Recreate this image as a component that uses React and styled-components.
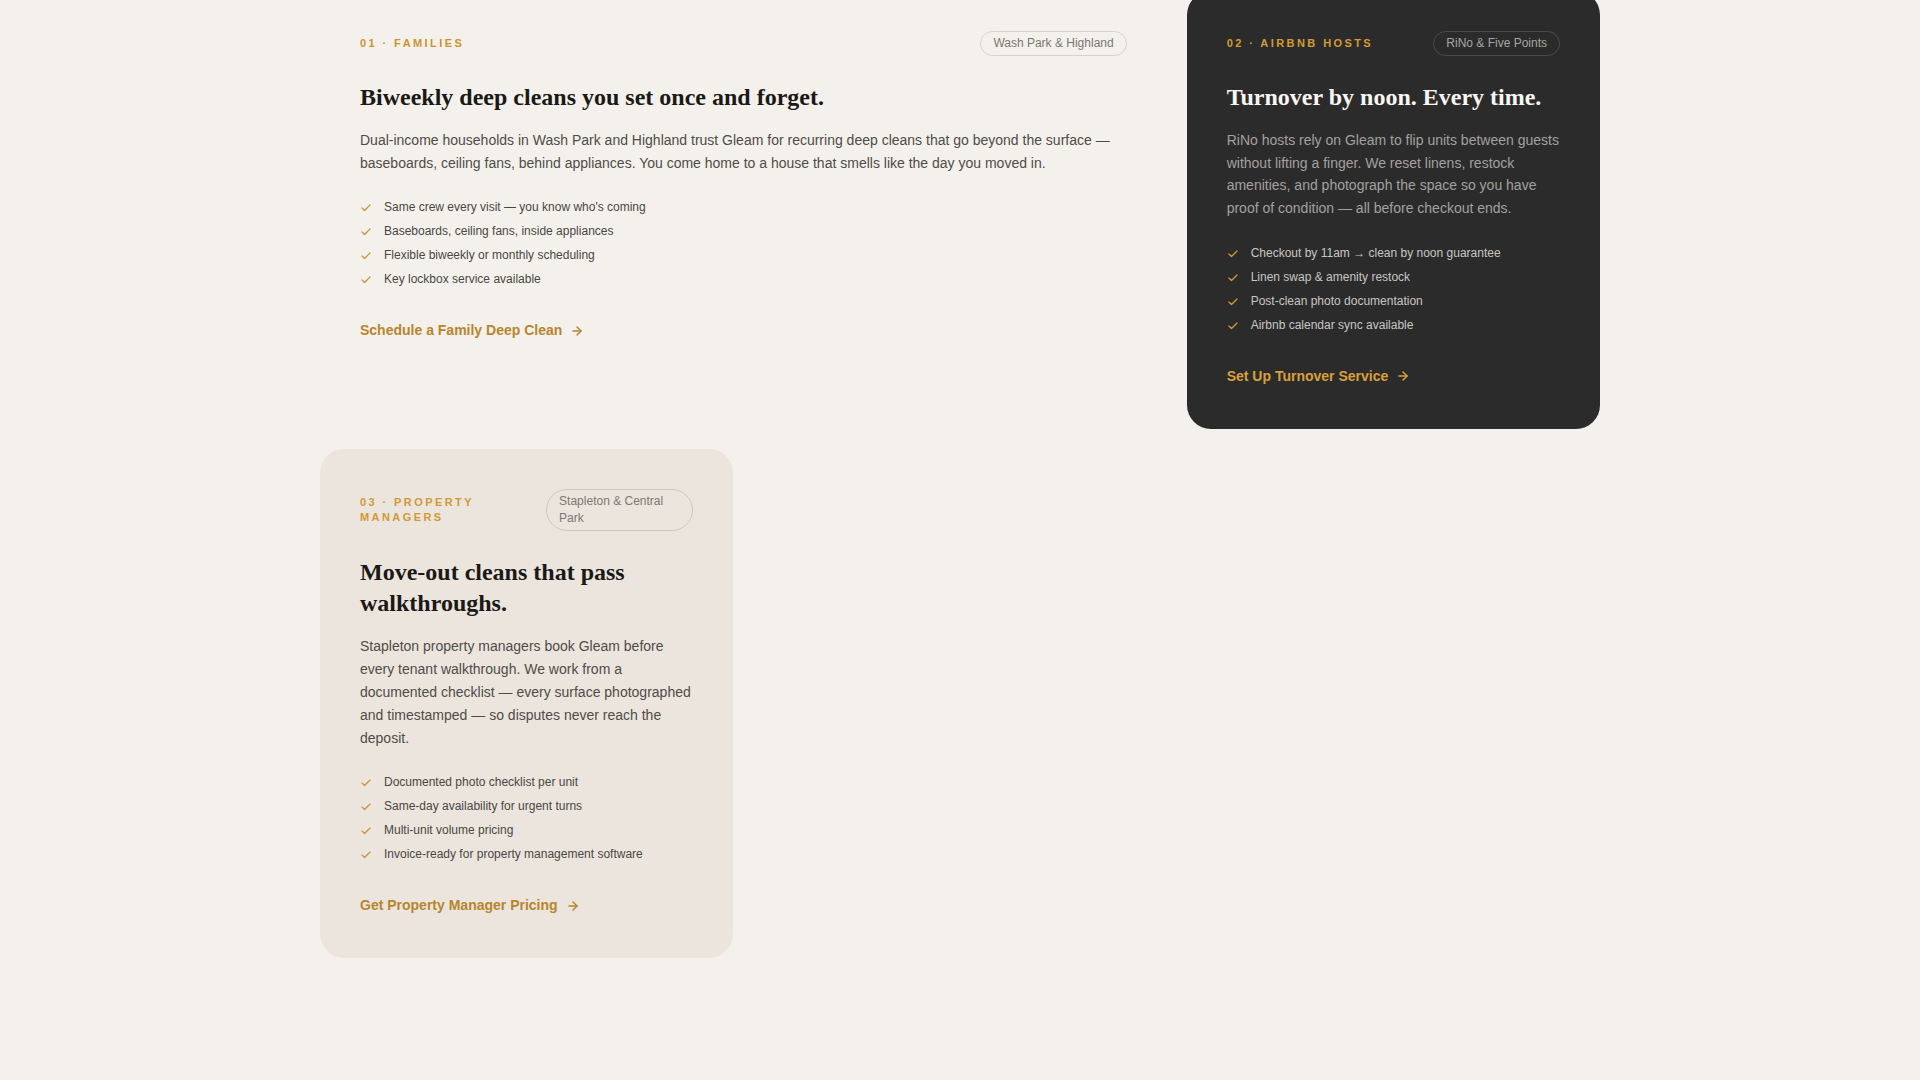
import React from "react";
import styled, { createGlobalStyle, css } from "styled-components";
import { Check, ArrowRight } from "lucide-react";

const Global = createGlobalStyle`
  html, body { margin: 0; padding: 0; background: #f4f1ec; }
  body { font-family: "Liberation Sans", Arial, sans-serif; -webkit-font-smoothing: antialiased; }
  * { box-sizing: border-box; }
`;

const Page = styled.main`
  min-height: 1080px;
  background: #f4f1ec;
  overflow: hidden;
`;

const Grid = styled.section`
  max-width: 1280px;
  margin: -9px auto 0;
  display: grid;
  grid-template-columns: repeat(3, 1fr);
  gap: 20px;
  align-items: start;
`;

const themes = {
  plain: css`
    background: transparent;
    --label: #c9942f;
    --pill-border: #d8d2ca;
    --pill-text: #7b7873;
    --title: #1b1916;
    --body: #4f4c47;
    --item: #4a4742;
    --check: #c9963c;
    --link: #b8852c;
  `,
  dark: css`
    background: #2b2b2c;
    --label: #d49b33;
    --pill-border: #4b4b4b;
    --pill-text: #a8a6a2;
    --title: #f8f6f2;
    --body: #a3a19d;
    --item: #c9c6c0;
    --check: #d39c3a;
    --link: #d9a03a;
  `,
  tint: css`
    background: #ebe5de;
    --label: #d09a36;
    --pill-border: #cfc8bf;
    --pill-text: #7b7873;
    --title: #1b1916;
    --body: #4f4c47;
    --item: #4a4742;
    --check: #c9963c;
    --link: #b8852c;
  `,
};

const Card = styled.article`
  grid-column: span ${(p) => p.$span || 1};
  padding: 40px 40px 42px;
  border-radius: 24px;
  ${(p) => themes[p.$variant]}
`;

const Header = styled.header`
  display: flex;
  justify-content: space-between;
  align-items: center;
  margin-bottom: 26px;
`;

const Label = styled.span`
  font-size: 11px;
  font-weight: 700;
  letter-spacing: 0.22em;
  line-height: 1.35;
  text-transform: uppercase;
  color: var(--label);
`;

const Pill = styled.span`
  font-size: 12px;
  line-height: 1.4;
  color: var(--pill-text);
  border: 1px solid var(--pill-border);
  border-radius: 999px;
  padding: 3px 12px;
`;

const Title = styled.h3`
  margin: 0 0 15px;
  font-family: "Liberation Serif", "Times New Roman", serif;
  font-size: 24px;
  font-weight: 700;
  line-height: 1.33;
  color: var(--title);
`;

const Body = styled.p`
  margin: 0 0 24px;
  font-size: 14px;
  line-height: 1.63;
  color: var(--body);
`;

const List = styled.ul`
  list-style: none;
  margin: 0 0 32px;
  padding: 0;
  display: flex;
  flex-direction: column;
  gap: 6px;
`;

const Item = styled.li`
  display: flex;
  align-items: center;
  gap: 12px;
  font-size: 12px;
  line-height: 18px;
  color: var(--item);

  svg { flex: none; color: var(--check); margin-top: 2px; }
`;

const CTA = styled.a`
  display: inline-flex;
  align-items: center;
  gap: 8px;
  font-size: 14px;
  font-weight: 700;
  line-height: 21px;
  color: var(--link);
  text-decoration: none;
  cursor: pointer;
`;

const segments = [
  {
    variant: "plain",
    span: 2,
    label: "01 · Families",
    area: "Wash Park & Highland",
    title: "Biweekly deep cleans you set once and forget.",
    body: "Dual-income households in Wash Park and Highland trust Gleam for recurring deep cleans that go beyond the surface — baseboards, ceiling fans, behind appliances. You come home to a house that smells like the day you moved in.",
    items: [
      "Same crew every visit — you know who's coming",
      "Baseboards, ceiling fans, inside appliances",
      "Flexible biweekly or monthly scheduling",
      "Key lockbox service available",
    ],
    cta: "Schedule a Family Deep Clean",
  },
  {
    variant: "dark",
    span: 1,
    label: "02 · Airbnb Hosts",
    area: "RiNo & Five Points",
    title: "Turnover by noon. Every time.",
    body: "RiNo hosts rely on Gleam to flip units between guests without lifting a finger. We reset linens, restock amenities, and photograph the space so you have proof of condition — all before checkout ends.",
    items: [
      "Checkout by 11am → clean by noon guarantee",
      "Linen swap & amenity restock",
      "Post-clean photo documentation",
      "Airbnb calendar sync available",
    ],
    cta: "Set Up Turnover Service",
  },
  {
    variant: "tint",
    span: 1,
    label: "03 · Property Managers",
    area: "Stapleton & Central Park",
    title: "Move-out cleans that pass walkthroughs.",
    body: "Stapleton property managers book Gleam before every tenant walkthrough. We work from a documented checklist — every surface photographed and timestamped — so disputes never reach the deposit.",
    items: [
      "Documented photo checklist per unit",
      "Same-day availability for urgent turns",
      "Multi-unit volume pricing",
      "Invoice-ready for property management software",
    ],
    cta: "Get Property Manager Pricing",
  },
];

export default function App() {
  return (
    <Page>
      <Global />
      <Grid>
        {segments.map((s) => (
          <Card key={s.label} $variant={s.variant} $span={s.span}>
            <Header>
              <Label>{s.label}</Label>
              <Pill>{s.area}</Pill>
            </Header>
            <Title>{s.title}</Title>
            <Body>{s.body}</Body>
            <List>
              {s.items.map((it) => (
                <Item key={it}>
                  <Check size={12} strokeWidth={2.5} />
                  <span>{it}</span>
                </Item>
              ))}
            </List>
            <CTA>
              {s.cta}
              <ArrowRight size={14} strokeWidth={2.5} />
            </CTA>
          </Card>
        ))}
      </Grid>
    </Page>
  );
}
